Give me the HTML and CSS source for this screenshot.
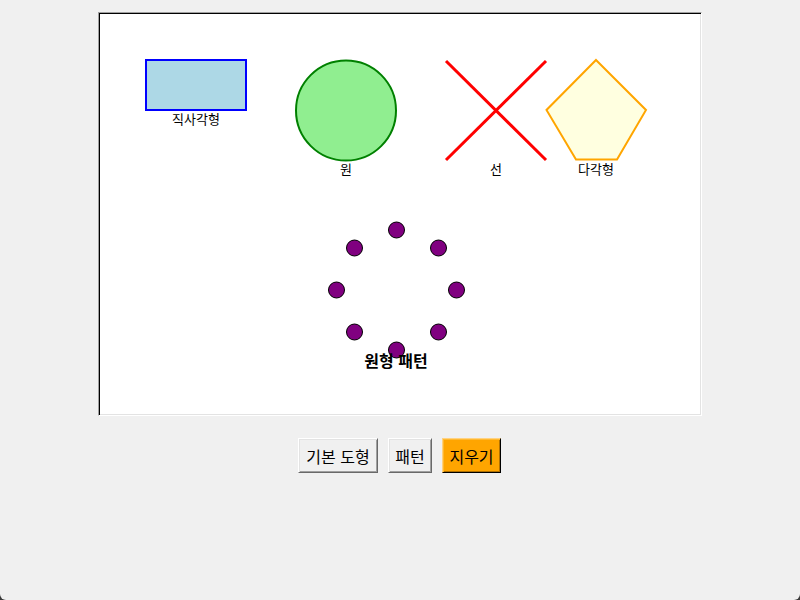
FILE: index.html
```html
<!DOCTYPE html>
<html lang="ko">
<head>
<meta charset="utf-8">
<title>도형 그리기</title>
<link rel="stylesheet" href="styles.css">
</head>
<body>
<div class="window">
  <div class="canvas">
    <svg class="drawing" width="600" height="400" viewBox="100 14 600 400" xmlns="http://www.w3.org/2000/svg">
      <rect x="146" y="60" width="100" height="50" fill="#add8e6" stroke="#0000ff" stroke-width="2"/>
      <text class="lbl" x="196" y="124" text-anchor="middle">직사각형</text>

      <circle cx="346" cy="110.5" r="50" fill="#90ee90" stroke="#008000" stroke-width="2"/>
      <text class="lbl" x="346" y="174" text-anchor="middle">원</text>

      <line x1="446" y1="61" x2="546" y2="160" stroke="#ff0000" stroke-width="3"/>
      <line x1="546" y1="61" x2="446" y2="160" stroke="#ff0000" stroke-width="3"/>
      <text class="lbl" x="496" y="174" text-anchor="middle">선</text>

      <polygon points="596,60 646,110 617,159.5 576,159.5 546.5,110" fill="#ffffe0" stroke="#ffa500" stroke-width="2"/>
      <text class="lbl" x="596" y="174" text-anchor="middle">다각형</text>

      <g fill="#800080" stroke="#000" stroke-width="1">
        <circle cx="396.5" cy="230" r="8"/>
        <circle cx="438.5" cy="248" r="8"/>
        <circle cx="456.5" cy="290" r="8"/>
        <circle cx="438.5" cy="332" r="8"/>
        <circle cx="396.5" cy="350" r="8"/>
        <circle cx="354.5" cy="332" r="8"/>
        <circle cx="336.5" cy="290" r="8"/>
        <circle cx="354.5" cy="248" r="8"/>
      </g>
      <text class="title" x="396" y="366.5" text-anchor="middle">원형 패턴</text>
    </svg>
  </div>
  <div class="toolbar">
    <button class="btn btn-basic">기본 도형</button>
    <button class="btn btn-pattern">패턴</button>
    <button class="btn btn-clear">지우기</button>
  </div>
</div>
</body>
</html>
```

FILE: styles.css
```css
html {
  background: #3a3a3a;
}
body {
  margin: 0;
  width: 800px;
  height: 600px;
  overflow: hidden;
}
.window {
  width: 800px;
  height: 600px;
  background: #f0f0f0;
  border-radius: 0 0 6px 6px;
  display: flex;
  flex-direction: column;
  align-items: center;
  padding-top: 12px;
  box-sizing: border-box;
  font-family: "Noto Sans CJK KR", "Noto Sans", sans-serif;
}
.canvas {
  width: 600px;
  height: 400px;
  background: #ffffff;
  border: 1px solid;
  border-color: #a0a0a0 #ffffff #ffffff #a0a0a0;
  box-shadow: inset 1px 1px 0 #000000, inset -1px -1px 0 #e3e3e3;
  padding: 1px;
  flex: none;
}
.drawing {
  display: block;
}
.lbl {
  font-family: "Noto Sans CJK KR", sans-serif;
  font-size: 13px;
  fill: #000;
}
.title {
  font-family: "Noto Sans CJK KR", sans-serif;
  font-size: 16px;
  font-weight: bold;
  fill: #000;
}
.toolbar {
  display: flex;
  gap: 10px;
  margin-top: 22px;
  margin-left: -1px;
}
.btn {
  height: 35px;
  padding: 0;
  margin: 0;
  font-family: "Noto Sans CJK KR", sans-serif;
  font-size: 16px;
  color: #000;
  background: #f0f0f0;
  border: 1px solid;
  border-color: #ffffff #696969 #696969 #ffffff;
  box-shadow: inset 1px 1px 0 #e3e3e3, inset -1px -1px 0 #a0a0a0;
  display: flex;
  align-items: center;
  justify-content: center;
  line-height: 1;
}
.btn-basic { width: 80px; }
.btn-pattern { width: 44px; }
.btn-clear {
  width: 59px;
  background: #ffa500;
  border-color: #ffd280 #000000 #000000 #ffd280;
  box-shadow: inset 1px 1px 0 #ffb830, inset -1px -1px 0 #b07000;
}
```
